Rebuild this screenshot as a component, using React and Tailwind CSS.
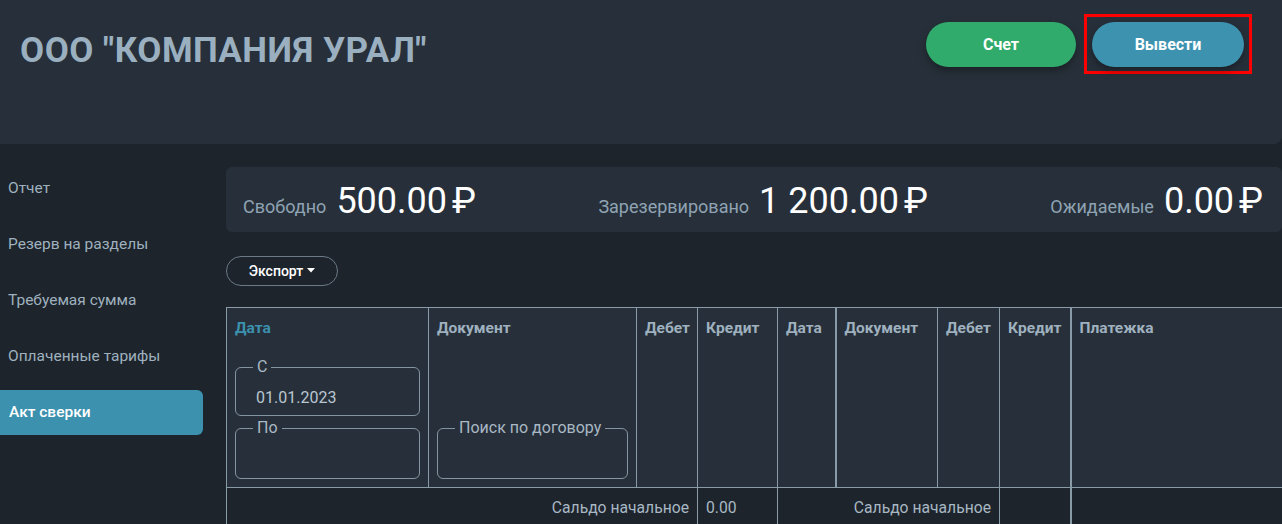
import React from "react";

const menu = ["Отчет", "Резерв на разделы", "Требуемая сумма", "Оплаченные тарифы", "Акт сверки"];

function Field({ label, value, tall }) {
  return (
    <fieldset className={(tall ? "h-[60px]" : "h-[58px]") + " rounded-md border border-[#8494a0] px-[20px]"}>
      <legend className="-ml-[3px] px-[4px] text-[16px] leading-[18px] text-[#a9b8c4]">{label}</legend>
      {value && <div className="pt-[12px] text-[16px] leading-[20px] text-[#b9c6d1]">{value}</div>}
    </fieldset>
  );
}

function Stat({ label, value }) {
  return (
    <div className="flex items-baseline gap-[10px]">
      <span className="text-[18px] text-[#8fa3b3]">{label}</span>
      <span className="text-[36px] leading-none text-white">
        {value}
        <span className="ml-[5px]">₽</span>
      </span>
    </div>
  );
}

export default function App() {
  const th = "border border-[#8a9ba8] px-[8px] pt-[9px] align-top text-left text-[15.5px] leading-[22px] font-bold text-[#9fb1bf]";
  const td = "border border-[#8a9ba8] px-[8px] h-[40px] text-[15.7px] text-[#a8b8c4]";

  return (
    <div className="min-h-screen bg-[#1d242b] font-['Roboto',sans-serif]">
      <header className="flex h-[144px] items-start justify-between rounded-br-lg bg-[#27303a] pl-[20px] pr-[30px]">
        <h1 className="mt-[25px] text-[35px] font-bold tracking-[0.5px] text-[#9aafbf]">ООО "КОМПАНИЯ УРАЛ"</h1>
        <div className="mt-[14px] flex items-start gap-[8px]">
          <button className="mt-[8px] h-[45px] w-[150px] rounded-full bg-[#31ab6b] text-[16px] font-bold text-white shadow-[0_4px_8px_rgba(0,0,0,0.35)]">
            Счет
          </button>
          <div className="border-[3px] border-[#ff0000] px-[5px] pb-[4px] pt-[5px]">
            <button className="h-[45px] w-[152px] rounded-full bg-[#3d93af] text-[16px] font-bold text-white shadow-[0_4px_8px_rgba(0,0,0,0.35)]">
              Вывести
            </button>
          </div>
        </div>
      </header>

      <div className="flex gap-[23px]">
        <nav className="flex w-[203px] shrink-0 flex-col gap-[11px] pt-[22px]">
          {menu.map((m, i) => (
            <div
              key={m}
              className={
                i === 4
                  ? "flex h-[45px] items-center rounded-r-md bg-[#3c91ae] pl-[9px] text-[15.5px] font-medium text-white"
                  : "flex h-[45px] items-center pl-[8px] text-[15.5px] text-[#9fb1bf]"
              }
            >
              {m}
            </div>
          ))}
        </nav>

        <main className="min-w-0 flex-1 overflow-hidden pt-[23px]">
          <div className="flex h-[65px] items-center justify-between rounded-md bg-[#27303a] pl-[17px] pr-[19px] pt-[4px]">
            <Stat label="Свободно" value="500.00" />
            <Stat label="Зарезервировано" value="1 200.00" />
            <Stat label="Ожидаемые" value="0.00" />
          </div>

          <button className="mt-[24px] flex h-[30px] w-[112px] items-center justify-center gap-[4px] rounded-full border border-[#6b7a86] text-[14px] font-medium text-white">
            Экспорт
            <svg width="8" height="5" viewBox="0 0 8 5" className="mb-[2px]">
              <path d="M0 0h8L4 4.5z" fill="currentColor" />
            </svg>
          </button>

          <table className="mt-[21px] w-[1060px] table-fixed border-collapse">
            <colgroup>
              <col className="w-[202px]" />
              <col className="w-[208px]" />
              <col className="w-[61px]" />
              <col className="w-[80px]" />
              <col className="w-[58px]" />
              <col className="w-[102px]" />
              <col className="w-[62px]" />
              <col className="w-[71px]" />
              <col />
            </colgroup>
            <thead>
              <tr className="h-[180px] bg-[#27303a]">
                <th className={th}>
                  <div className="flex flex-col">
                    <span className="text-[#3c91ae]">Дата</span>
                    <div className="mt-[19px] flex flex-col gap-[3px] font-normal">
                      <Field label="С" value="01.01.2023" />
                      <Field label="По" tall />
                    </div>
                  </div>
                </th>
                <th className={th}>
                  <div className="flex h-[162px] flex-col justify-between">
                    <span>Документ</span>
                    <div className="font-normal">
                      <Field label="Поиск по договору" tall />
                    </div>
                  </div>
                </th>
                <th className={th}>Дебет</th>
                <th className={th}>Кредит</th>
                <th className={th}>Дата</th>
                <th className={th + " border-l-2"}>Документ</th>
                <th className={th}>Дебет</th>
                <th className={th}>Кредит</th>
                <th className={th + " border-l-2"}>Платежка</th>
              </tr>
            </thead>
            <tbody>
              <tr>
                <td colSpan={3} className={td + " text-right"}>Сальдо начальное</td>
                <td className={td}>0.00</td>
                <td colSpan={3} className={td + " text-right"}>Сальдо начальное</td>
                <td className={td}></td>
                <td className={td + " border-l-2"}></td>
              </tr>
            </tbody>
          </table>
        </main>
      </div>
    </div>
  );
}
